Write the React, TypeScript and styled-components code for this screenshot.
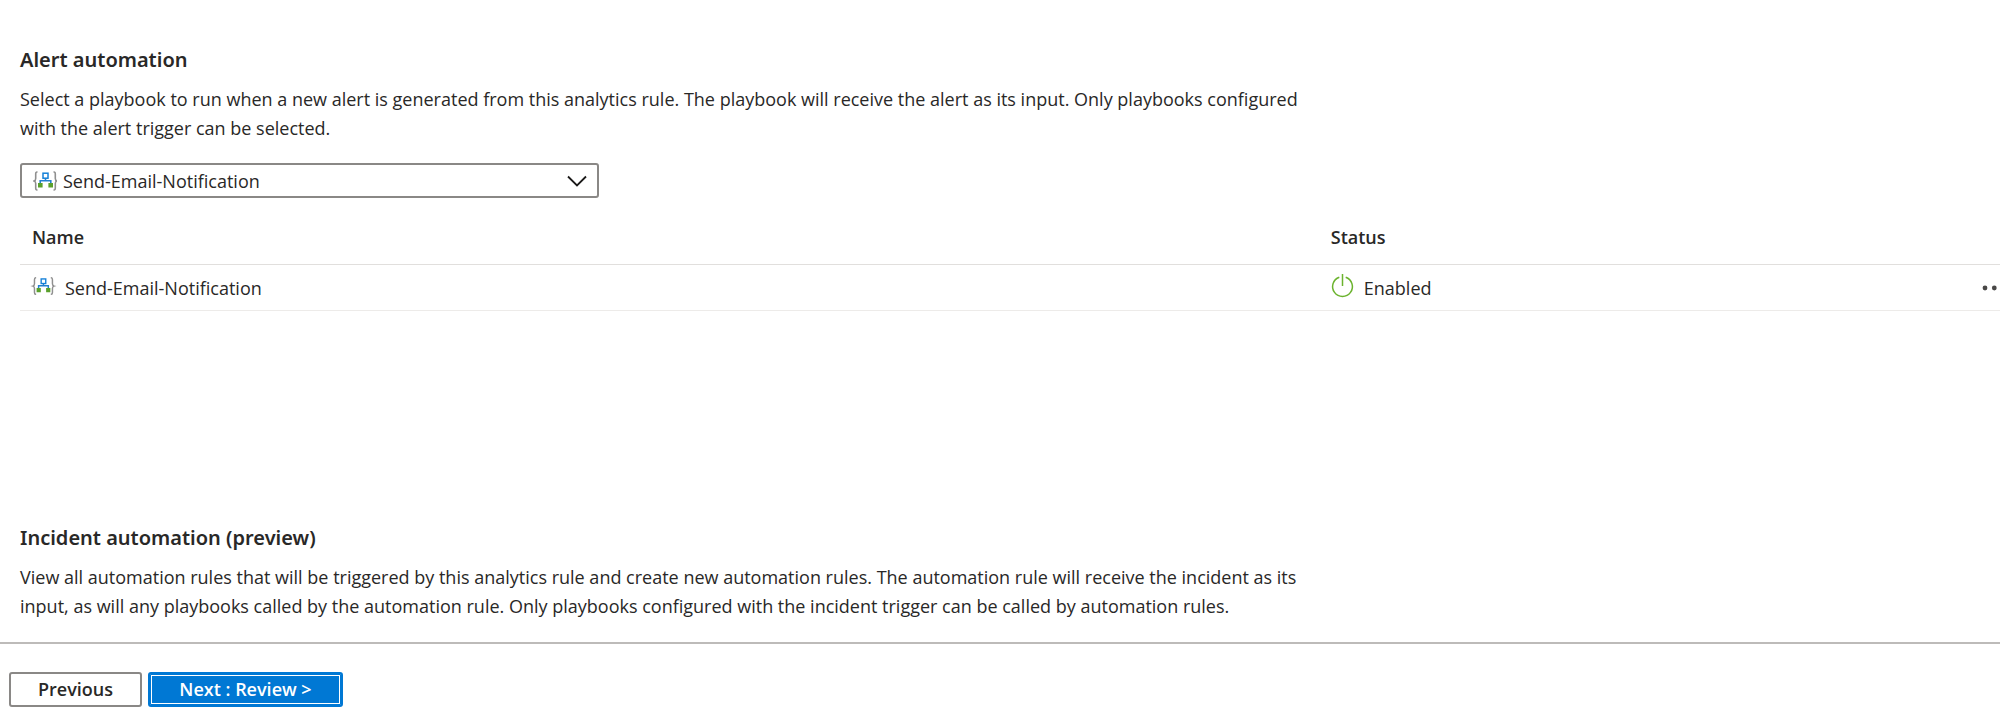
import React from "react";
import styled, { createGlobalStyle } from "styled-components";

const GlobalStyle = createGlobalStyle`
  *, *::before, *::after { box-sizing: border-box; }
  body {
    margin: 0;
    background: #ffffff;
    color: #292827;
    font-family: "Open Sans", "Noto Sans", sans-serif;
    font-size: 18px;
    line-height: 29px;
  }
`;

const Page = styled.div`
  display: flex;
  flex-direction: column;
  min-height: 100vh;
  overflow: hidden;
`;

const Content = styled.main`
  padding: 46px 0 21px 20px;
`;

const Section = styled.section<{ $minHeight?: number }>`
  min-height: ${(p) => p.$minHeight ?? 0}px;
`;

const Heading = styled.h2`
  margin: 0;
  font-family: "Noto Sans", "Open Sans", sans-serif;
  font-size: 20px;
  line-height: 28px;
  font-weight: 600;
`;

const Description = styled.p`
  max-width: 1290px;
  margin: 11px 0 0;
`;

const Picker = styled.label`
  display: grid;
  align-items: center;
  width: 579px;
  max-width: 100%;
  margin-top: 20px;

  & > * {
    grid-area: 1 / 1;
  }

  & > svg {
    pointer-events: none;
    z-index: 1;
  }
`;

const Select = styled.select`
  appearance: none;
  width: 100%;
  height: 35px;
  padding: 2px 48px 0 41px;
  border: 2px solid #8a8886;
  border-radius: 3px;
  background: #ffffff;
  color: inherit;
  font: inherit;
`;

const PickerIcon = styled.svg`
  width: 24px;
  height: 24px;
  margin-left: 13px;
`;

const Chevron = styled.svg`
  width: 20px;
  height: 12px;
  margin-right: 12px;
  justify-self: end;
`;

const Table = styled.table`
  width: calc(100% + 12px);
  margin-top: 13px;
  border-collapse: collapse;
  table-layout: fixed;
`;

const HeaderCell = styled.th<{ $width?: string }>`
  width: ${(p) => p.$width ?? "auto"};
  height: 53px;
  padding: 0 12px;
  border-bottom: 1px solid #e1dfdd;
  font-weight: 600;
  text-align: left;
`;

const Cell = styled.td`
  height: 46px;
  padding: 0 12px;
  border-bottom: 1px solid #edebe9;
`;

const CellContent = styled.div<{ $gap: number }>`
  display: flex;
  align-items: center;
  gap: ${(p) => p.$gap}px;
`;

const CellText = styled.span`
  padding-top: 2px;
`;

const RowIcon = styled.svg<{ $size: number }>`
  width: ${(p) => p.$size}px;
  height: ${(p) => p.$size}px;
  flex: none;
  overflow: visible;
`;

const MenuCell = styled(Cell)`
  padding: 0 4px;
  text-align: right;
`;

const MenuButton = styled.button`
  display: inline-flex;
  align-items: center;
  height: 28px;
  padding: 0;
  border: 0;
  background: none;
  color: #494847;
  vertical-align: middle;
`;

const Footer = styled.footer`
  display: flex;
  gap: 6px;
  padding: 28px 9px 8px;
  border-top: 2px solid #bdbbb9;
`;

const Button = styled.button<{ $primary?: boolean }>`
  min-width: ${(p) => (p.$primary ? 195 : 133)}px;
  height: 35px;
  padding: 0 24px 2px;
  border: 2px solid ${(p) => (p.$primary ? "#0078d4" : "#8a8886")};
  border-radius: 3px;
  background: ${(p) => (p.$primary ? "#0078d4" : "#ffffff")};
  box-shadow: ${(p) =>
    p.$primary ? "inset 0 0 0 1px #0078d4, inset 0 0 0 2px #ffffff" : "none"};
  color: ${(p) => (p.$primary ? "#ffffff" : "inherit")};
  font: inherit;
  font-weight: 600;
  line-height: 28px;
  white-space: nowrap;
`;

const LogicAppShapes = () => (
  <>
    <g fill="none" stroke="#8f8f8f" strokeWidth="1.6">
      <path d="M4.500 3H4Q2.700 3 2.700 5v4.500Q2.700 11.500 1 12q1.700.500 1.700 2.500V19q0 2 1.300 2h.500" />
      <path d="M20.500 3h.500q1.300 0 1.300 2v4.500q0 2 1.700 2.500-1.700.500-1.700 2.500V19q0 2-1.300 2h-.500" />
    </g>
    <path
      d="M12.500 9v2.500M7.200 15v-3.300h10.600V15"
      fill="none"
      stroke="#2480cf"
      strokeWidth="1.600"
    />
    <rect x="10" y="4.200" width="5" height="5" fill="#fff" stroke="#1580d8" strokeWidth="1.500" />
    <path d="M5 14h4.600v4.600H5zM15.400 14H20v4.600h-4.600z" fill="#5aa02c" />
  </>
);

export default function App() {
  return (
    <>
      <GlobalStyle />
      <Page>
        <Content>
          <Section $minHeight={478}>
            <Heading>Alert automation</Heading>
            <Description>
              Select a playbook to run when a new alert is generated from this analytics rule. The
              playbook will receive the alert as its input. Only playbooks configured with the alert
              trigger can be selected.
            </Description>
            <Picker>
              <Select aria-label="Playbook" defaultValue="send-email">
                <option value="send-email">Send-Email-Notification</option>
              </Select>
              <PickerIcon viewBox="0 0 24 24" aria-hidden="true">
                <LogicAppShapes />
              </PickerIcon>
              <Chevron viewBox="0 0 20 12" aria-hidden="true">
                <path d="M1 1.500l9 9 9-9" fill="none" stroke="#1b1a19" strokeWidth="1.800" />
              </Chevron>
            </Picker>
            <Table>
              <thead>
                <tr>
                  <HeaderCell scope="col" $width="65.2%">Name</HeaderCell>
                  <HeaderCell scope="col">Status</HeaderCell>
                  <HeaderCell as="td" $width="60px" />
                </tr>
              </thead>
              <tbody>
                <tr>
                  <Cell>
                    <CellContent $gap={11}>
                      <RowIcon $size={22} viewBox="0 1 24 24" aria-hidden="true">
                        <LogicAppShapes />
                      </RowIcon>
                      <CellText>Send-Email-Notification</CellText>
                    </CellContent>
                  </Cell>
                  <Cell>
                    <CellContent $gap={9}>
                      <RowIcon $size={24} viewBox="0 0 24 24" aria-hidden="true">
                        <path
                          d="M8.300 2.200a9.900 9.900 0 1 0 6.400 0M11.500-1v12"
                          fill="none"
                          stroke="#6bb32e"
                          strokeWidth="1.500"
                        />
                      </RowIcon>
                      <CellText>Enabled</CellText>
                    </CellContent>
                  </Cell>
                  <MenuCell>
                    <MenuButton type="button" aria-label="More actions">
                      <svg width="26" height="6" viewBox="0 0 26 6" fill="currentColor" aria-hidden="true">
                        <circle cx="3" cy="3" r="2.400" />
                        <circle cx="12.300" cy="3" r="2.400" />
                        <circle cx="21.600" cy="3" r="2.400" />
                      </svg>
                    </MenuButton>
                  </MenuCell>
                </tr>
              </tbody>
            </Table>
          </Section>
          <Section>
            <Heading>Incident automation (preview)</Heading>
            <Description>
              View all automation rules that will be triggered by this analytics rule and create new
              automation rules. The automation rule will receive the incident as its input, as will
              any playbooks called by the automation rule. Only playbooks configured with the
              incident trigger can be called by automation rules.
            </Description>
          </Section>
        </Content>
        <Footer>
          <Button type="button">Previous</Button>
          <Button type="button" $primary>
            Next : Review &gt;
          </Button>
        </Footer>
      </Page>
    </>
  );
}
